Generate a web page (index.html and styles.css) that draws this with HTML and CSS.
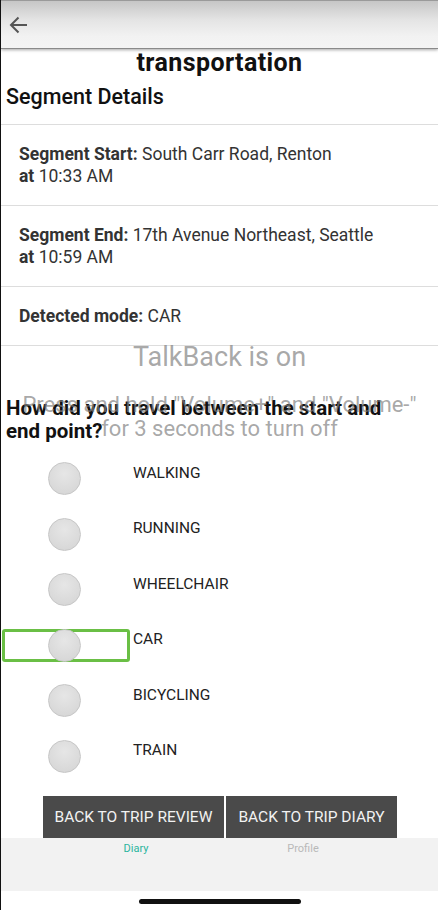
FILE: index.html
```html
<!DOCTYPE html>
<html>
<head>
<meta charset="utf-8">
<link rel="stylesheet" href="styles.css">
</head>
<body>
<div class="screen">
  <header class="appbar">
    <svg class="back" width="24" height="24" viewBox="0 0 24 24"><path d="M19 12H3.5M10.5 4.5L3 12l7.5 7.5" fill="none" stroke="#555" stroke-width="2"/></svg>
  </header>
  <h1 class="title">transportation</h1>
  <h2 class="section">Segment Details</h2>
  <div class="detail"><b>Segment Start:</b> South Carr Road, Renton<br><b>at</b> 10:33 AM</div>
  <div class="detail"><b>Segment End:</b> 17th Avenue Northeast, Seattle<br><b>at</b> 10:59 AM</div>
  <div class="detail"><b>Detected mode:</b> CAR</div>
  <p class="question">How did you travel between the start and end point?</p>
  <ul class="options">
    <li class="opt"><span class="radio"></span><span class="label">WALKING</span></li>
    <li class="opt"><span class="radio"></span><span class="label">RUNNING</span></li>
    <li class="opt"><span class="radio"></span><span class="label">WHEELCHAIR</span></li>
    <li class="opt focused"><span class="focus"></span><span class="radio"></span><span class="label">CAR</span></li>
    <li class="opt"><span class="radio"></span><span class="label">BICYCLING</span></li>
    <li class="opt"><span class="radio"></span><span class="label">TRAIN</span></li>
  </ul>
  <div class="actions">
    <button class="btn">BACK TO TRIP REVIEW</button>
    <button class="btn">BACK TO TRIP DIARY</button>
  </div>
  <nav class="tabs">
    <span class="tab active">Diary</span>
    <span class="tab">Profile</span>
  </nav>
  <div class="homebar"><span class="indicator"></span></div>
  <div class="toast">
    <div class="toast-title">TalkBack is on</div>
    <div class="toast-body">Press and hold "Volume+" and "Volume-"<br>for 3 seconds to turn off</div>
  </div>
</div>
</body>
</html>
```
FILE: styles.css
```css
* { box-sizing: border-box; }
html, body { margin: 0; padding: 0; background: #fff; }
body { font-family: Roboto, "Noto Sans", Arial, sans-serif; color: #222; }
.screen {
  position: relative;
  width: 438px;
  height: 910px;
  border-left: 1px solid #111;
  overflow: hidden;
}
.appbar {
  height: 48px;
  border-top: 1px solid #9a9a9a;
  background: linear-gradient(#c6c6c6 0%, #e4e4e4 40%, #f2f2f2 75%, #f4f4f4 100%);
  box-shadow: 0 1px 0 #8a8a8a, 0 2px 3px rgba(0,0,0,0.35);
  display: flex;
  align-items: center;
  padding-left: 7px;
  position: relative;
  z-index: 1;
}
.back { display: block; margin-top: 1px; }
.title {
  margin: 1px 0 0;
  font-size: 25px;
  line-height: 28px;
  letter-spacing: 0.4px;
  font-weight: 700;
  text-align: center;
  color: #111;
}
.section {
  margin: 6px 0 0;
  padding: 0 0 13px 5px;
  font-size: 21.5px;
  line-height: 28px;
  font-weight: 500;
  color: #111;
  border-bottom: 1px solid #ddd;
}
.detail {
  padding: 18px 18px;
  font-size: 17.5px;
  line-height: 22px;
  color: #333;
  border-bottom: 1px solid #ddd;
}
.detail b { font-weight: 700; color: #333; }
.question {
  margin: 51px 0 0;
  padding: 0 24px 0 5px;
  font-size: 20.5px;
  line-height: 23px;
  font-weight: 700;
  color: #111;
}
.options { list-style: none; margin: 8px 0 0; padding: 0; }
.opt {
  position: relative;
  height: 55.5px;
  display: flex;
  align-items: center;
}
.radio {
  width: 33px;
  height: 33px;
  margin-left: 47px;
  border-radius: 50%;
  border: 1px solid #c6c6c6;
  background: radial-gradient(circle at 50% 35%, #e6e6e6, #d9d9d9 70%, #d2d2d2);
  position: relative;
  z-index: 1;
}
.label {
  margin-left: 52px;
  margin-bottom: 12px;
  font-size: 15.5px;
  color: #222;
}
.focus {
  position: absolute;
  left: 1px;
  top: 11px;
  width: 128px;
  height: 33px;
  border: 3px solid #6abf45;
  border-radius: 3px;
}
.actions {
  display: flex;
  justify-content: center;
  gap: 2px;
  margin-top: 12px;
}
.btn {
  height: 42px;
  border: 0;
  background: #4a4a4a;
  color: #f2f2f2;
  font-family: Roboto, Arial, sans-serif;
  font-size: 15.5px;
  padding: 0 12px;
  margin: 0;
}
.tabs {
  height: 53px;
  background: #f2f2f2;
  display: flex;
  justify-content: center;
  align-items: flex-start;
}
.tab {
  width: 167px;
  text-align: center;
  font-size: 11px;
  line-height: 14px;
  padding-top: 4px;
  color: #b9b9b9;
}
.tab.active { color: #2bb59e; }
.homebar {
  height: 19px;
  display: flex;
  justify-content: center;
  padding-top: 8px;
}
.indicator {
  width: 162px;
  height: 5px;
  border-radius: 3px;
  background: #111;
}
.toast {
  position: absolute;
  left: 0;
  right: 0;
  top: 342px;
  text-align: center;
  color: rgba(130,130,130,0.7);
  pointer-events: none;
  z-index: 2;
}
.toast-title { font-size: 27px; line-height: 30px; }
.toast-body { margin-top: 21px; font-size: 22px; line-height: 24px; }
```
